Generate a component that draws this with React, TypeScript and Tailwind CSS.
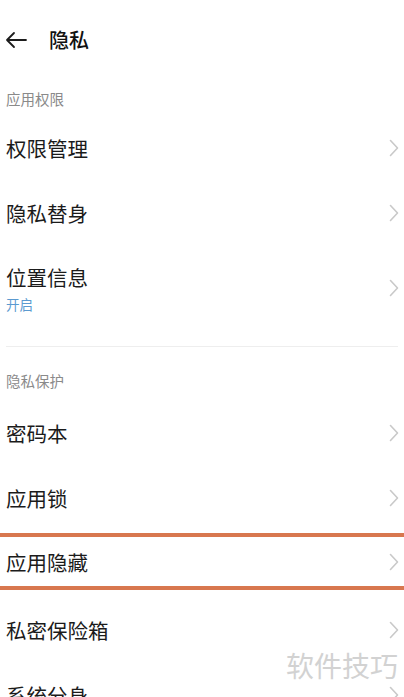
import { ReactNode } from 'react'

const FONT = { fontFamily: '"Noto Sans CJK SC", "Noto Sans", sans-serif' }

function Chevron() {
  return (
    <svg width="10" height="18" viewBox="0 0 10 18" fill="none" className="shrink-0">
      <path d="M1.5 1.5 L8.5 9 L1.5 16.5" stroke="#c9c9c9" strokeWidth="1.6" strokeLinecap="round" strokeLinejoin="round" />
    </svg>
  )
}

function Row({ title, sub, h = 'h-[65px]' }: { title: string; sub?: ReactNode; h?: string }) {
  return (
    <div className={`flex ${h} items-center justify-between pl-[6px] pr-[5px]`}>
      <div className="flex flex-col">
        <span className="text-[20.5px] leading-[28px] text-[#1b1b1b]">{title}</span>
        {sub}
      </div>
      <Chevron />
    </div>
  )
}

function Label({ children, h }: { children: string; h: string }) {
  return (
    <div className={`flex ${h} items-end pl-[6px] text-[14.5px] text-[#8a8a8a]`}>{children}</div>
  )
}

export default function App() {
  return (
    <div className="relative h-[697px] w-[404px] overflow-hidden bg-white" style={FONT}>
      {/* top bar */}
      <div className="flex h-[80px] items-center">
        <svg width="24" height="18" viewBox="0 0 24 18" className="ml-[4px]" fill="none">
          <path d="M22 9 H3 M10 2 L3 9 L10 16" stroke="#1c1c1c" strokeWidth="1.8" strokeLinecap="round" strokeLinejoin="round" />
        </svg>
        <span className="ml-[21px] text-[20px] font-medium text-[#111]">隐私</span>
      </div>

      <Label h="h-[30px]">应用权限</Label>
      <div className="h-[5px]" />
      <Row title="权限管理" />
      <Row title="隐私替身" />
      <Row
        title="位置信息"
        h="h-[86px]"
        sub={<span className="mt-[3px] text-[13.5px] leading-[20px] text-[#5b9ad0]">开启</span>}
      />
      <div className="h-[15px]" />
      <div className="mx-[6px] h-px bg-[#eeeeee]" />

      <Label h="h-[45px]">隐私保护</Label>
      <div className="h-[8px]" />
      <Row title="密码本" />
      <Row title="应用锁" />
      <div className="h-[3px]" />
      <div className="border-y-4 border-[#d8774f]">
        <Row title="应用隐藏" h="h-[49px]" />
      </div>
      <div className="h-[7px]" />
      <Row title="私密保险箱" />
      <Row title="系统分身" />

      {/* watermark */}
      <div className="absolute right-[6px] top-[644px] text-[28px] text-[#d2d2d2]">软件技巧</div>
    </div>
  )
}
